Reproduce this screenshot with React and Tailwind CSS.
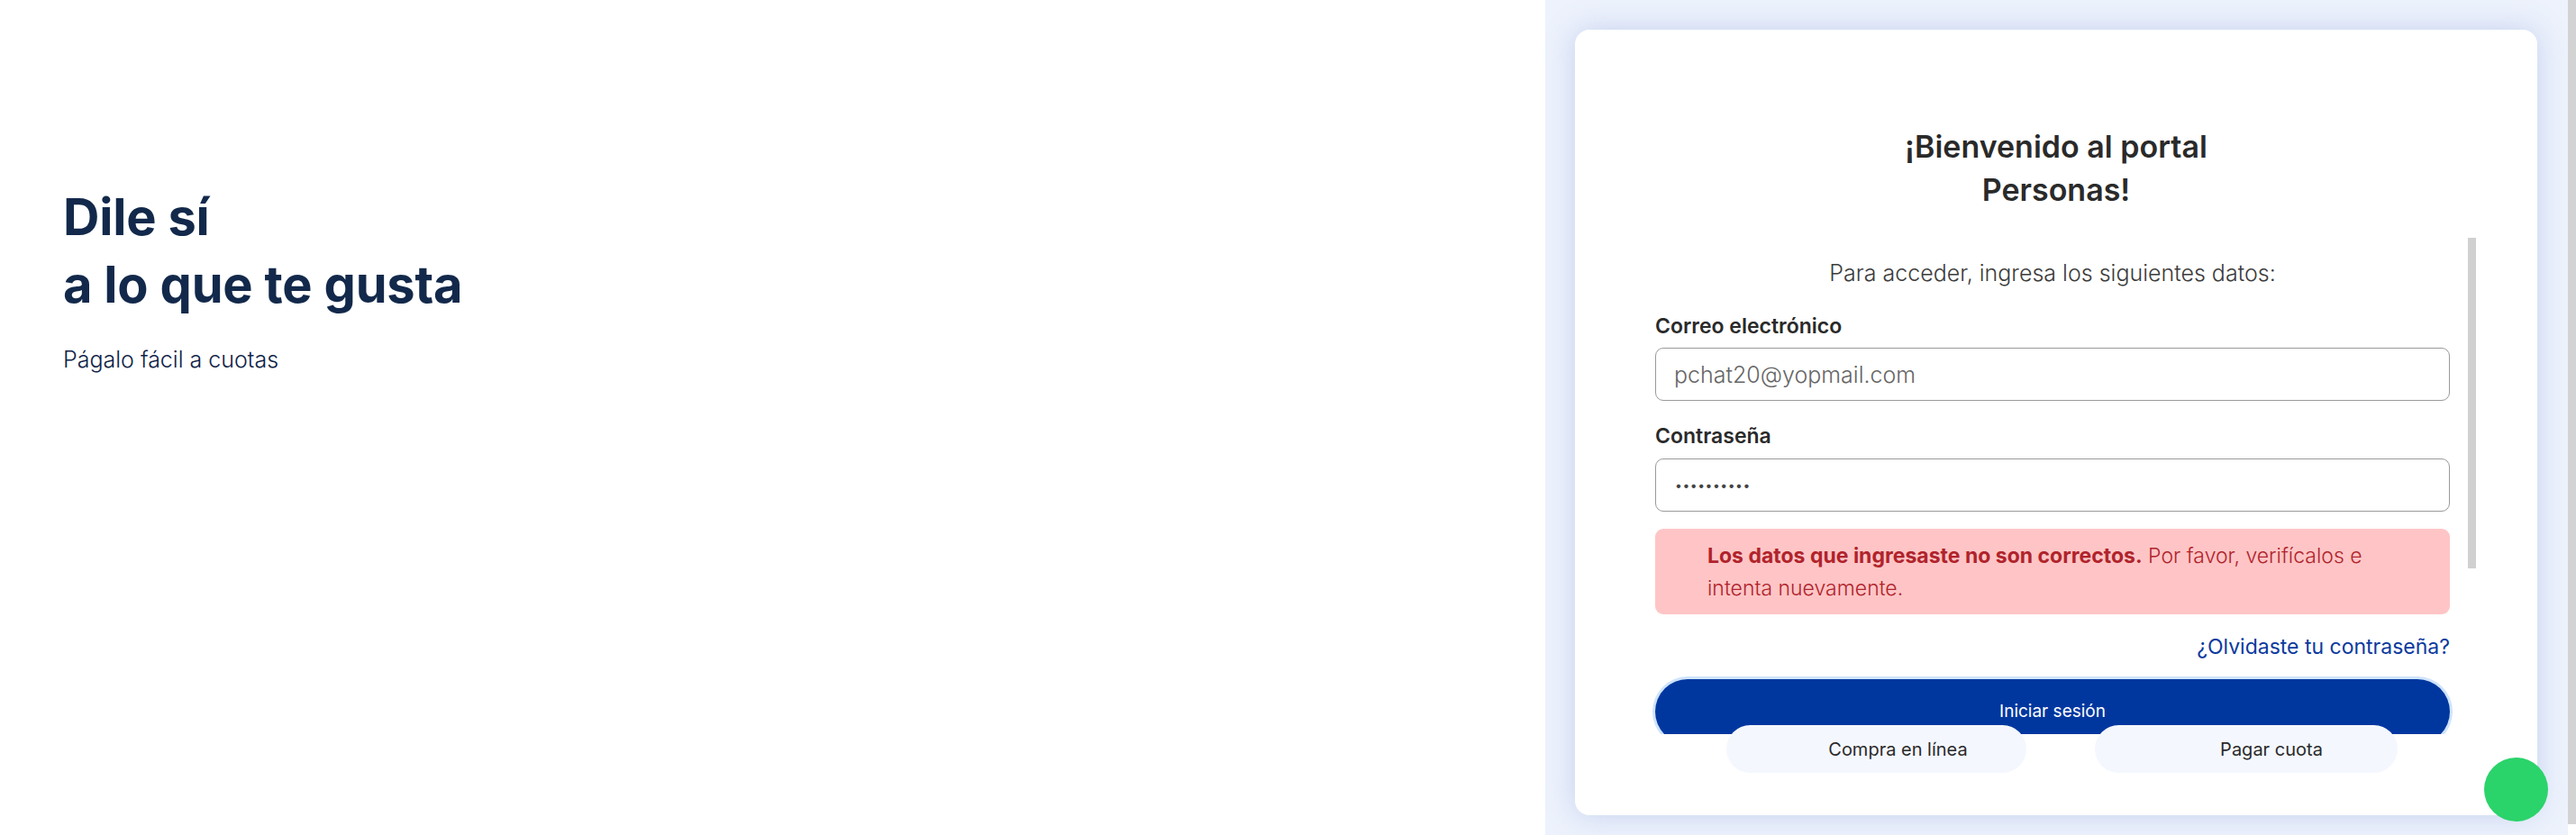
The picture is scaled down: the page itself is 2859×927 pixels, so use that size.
export default function App() {
  return (
    <div className="relative flex h-[927px] w-[2859px] overflow-hidden bg-white font-['Inter',sans-serif]">
      {/* Left hero */}
      <section className="flex-1 pl-[70px] pt-[204px]">
        <h1 className="text-[56px] font-bold leading-[75px] tracking-[-0.2px] text-[#13294b]">
          Dile sí
          <br />
          a lo que te gusta
        </h1>
        <p className="mt-[29px] text-[25px] font-light leading-[32px] text-[#0f2347]">
          Págalo fácil a cuotas
        </p>
      </section>

      {/* Right login panel */}
      <section className="w-[1135px] bg-[#edf2fc] pl-[33px] pt-[33px]">
        <div className="flex h-[872px] w-[1068px] flex-col rounded-[16px] bg-white shadow-[0_0_32px_rgba(120,150,215,0.35)]">
          <h2 className="pt-[106px] text-center text-[34px] font-semibold leading-[48px] text-[#2a2a2a]">
            ¡Bienvenido al portal
            <br />
            Personas!
          </h2>

          <div className="relative ml-[80px] mt-[29px] h-[551px] w-[922px] overflow-hidden pl-[9px] pr-[31px]">
            <div className="absolute right-[2px] top-0 h-[367px] w-[9px] bg-[#d0d0d0]" />

            <p className="pt-[23px] text-center text-[25px] font-light leading-[32px] text-[#3c3c3c]">
              Para acceder, ingresa los siguientes datos:
            </p>

            <label className="mt-[29px] block text-[23px] font-semibold leading-[28px] text-[#2a2a2a]">
              Correo electrónico
            </label>
            <input
              readOnly
              defaultValue="pchat20@yopmail.com"
              className="mt-[10px] block h-[59px] w-full rounded-[9px] border border-[#9a9a9a] bg-white px-[20px] text-[25px] font-light text-[#666666] outline-none"
            />

            <label className="mt-[25px] block text-[23px] font-semibold leading-[28px] text-[#2a2a2a]">
              Contraseña
            </label>
            <div className="mt-[11px] flex h-[59px] w-full items-center rounded-[9px] border border-[#9a9a9a] bg-white px-[21px]">
              <span className="text-[14px] leading-none tracking-[0.5px] text-[#444444]">••••••••••</span>
            </div>

            <div className="mt-[19px] h-[95px] w-full rounded-[9px] bg-[#ffc5c6] pl-[58px] pr-[30px] pt-[12px] text-[23px] leading-[36px] text-[#b0232b]">
              <span className="font-bold">Los datos que ingresaste no son correctos.</span>
              <span className="font-light"> Por favor, verifícalos e</span>
              <br />
              <span className="font-light">intenta nuevamente.</span>
            </div>

            <div className="mt-[22px] flex justify-end">
              <a className="text-[23px] leading-[28px] text-[#0b3a9e]">¿Olvidaste tu contraseña?</a>
            </div>

            <button className="mt-[22px] flex h-[72px] w-full items-center justify-center rounded-full bg-[#00379f] text-[19px] text-white ring-[3px] ring-[#cfe3fb]">
              Iniciar sesión
            </button>
          </div>

          <div className="relative z-10 -mt-[10px] flex gap-[76px] pl-[168px]">
            <button className="flex h-[53px] w-[333px] items-center justify-center rounded-full bg-[#f4f7fe] pl-[48px] text-[20px] text-[#2a2a2a]">
              Compra en línea
            </button>
            <button className="flex h-[53px] w-[336px] items-center justify-center rounded-full bg-[#f4f7fe] pl-[56px] text-[20px] text-[#2a2a2a]">
              Pagar cuota
            </button>
          </div>
        </div>
      </section>

      {/* Page scrollbar */}
      <div className="w-[9px]">
        <div className="h-[915px] w-full bg-[#d3d3d3]" />
      </div>

      {/* Floating chat button */}
      <div className="absolute right-[31px] top-[841px] h-[71px] w-[71px] rounded-full bg-[#2bd36b]" />
    </div>
  );
}
